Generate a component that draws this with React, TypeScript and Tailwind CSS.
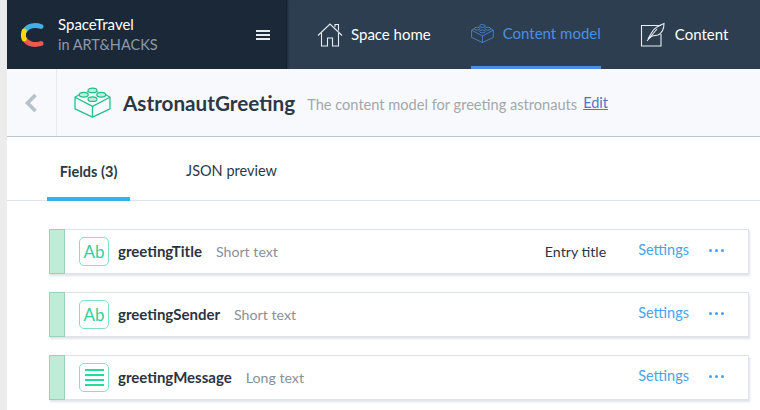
const font = { fontFamily: "Lato, 'Open Sans', sans-serif" };

function Logo() {
  return (
    <svg width="24" height="26" viewBox="0 0 24 26" fill="none" strokeWidth="5" strokeLinecap="round">
      <path d="M4 8.5 C7 3.5 14 2.5 20 4.5" stroke="#3fb1e3" />
      <path d="M20 21.5 C14 23.5 7 22.5 4 17.5" stroke="#f05751" />
      <path d="M3.2 9 C2.2 11.5 2.2 14.5 3.2 17" stroke="#ffd900" />
    </svg>
  );
}

function Brick({ size, color, fill = "none" }: { size: number; color: string; fill?: string }) {
  return (
    <svg width={size} height={size * 0.84} viewBox="0 0 38 32" fill="none" stroke={color} strokeWidth="1.3" strokeLinejoin="round">
      <path d="M1 10.5 L19 20 L37 10.5 L37 22.5 L19 31 L1 22.5 Z" />
      <path d="M19 20 L19 31" />
      <path d="M6 7.5 L1 10.5 M32 7.5 L37 10.5 M13 5 L14 5 M24 5 L25 5" />
      <ellipse cx="19" cy="3.5" rx="4.6" ry="2.4" fill={fill} />
      <ellipse cx="10" cy="8" rx="4.6" ry="2.4" fill={fill} />
      <ellipse cx="28" cy="8" rx="4.6" ry="2.4" fill={fill} />
      <ellipse cx="19" cy="12.5" rx="4.6" ry="2.4" fill={fill} />
    </svg>
  );
}

function HomeIcon() {
  return (
    <svg width="26" height="24" viewBox="0 0 26 24" fill="none" stroke="#e8ecf0" strokeWidth="1.1">
      <path d="M1 12.5 L13 1 L25 12.5" />
      <path d="M4.5 10 V23 H10.5 V15 H15.5 V23 H21.5 V10" />
      <path d="M18 4 V1.5 H21.5 V7.5" />
    </svg>
  );
}

function ContentIcon() {
  return (
    <svg width="26" height="26" viewBox="0 0 26 26" fill="none" stroke="#e8ecf0" strokeWidth="1.1">
      <path d="M21 3.5 H1.5 V24 H21 V12" />
      <path d="M8 17 L12 10 C14 6 19 3.5 24 1.5 C24 6 22 11 18 13 L12 14 Z" />
      <path d="M7 19 L17 7" />
    </svg>
  );
}

function Dots() {
  return (
    <span className="flex gap-[3px]">
      <span className="h-[3px] w-[3px] rounded-full bg-[#4a9fe8]" />
      <span className="h-[3px] w-[3px] rounded-full bg-[#4a9fe8]" />
      <span className="h-[3px] w-[3px] rounded-full bg-[#4a9fe8]" />
    </span>
  );
}

interface Field {
  name: string;
  type: string;
  long?: boolean;
  entryTitle?: boolean;
}

const fields: Field[] = [
  { name: "greetingTitle", type: "Short text", entryTitle: true },
  { name: "greetingSender", type: "Short text" },
  { name: "greetingMessage", type: "Long text", long: true },
];

function FieldRow({ field }: { field: Field }) {
  return (
    <div className="flex h-[45px] items-center border border-[#dfe4ec] bg-white shadow-[1px_2px_2px_rgba(130,145,165,0.25)]">
      <div className="-my-px -ml-px h-[45px] w-[16px] shrink-0 border border-[#9bd2b5] bg-[#c0ebd7]" />
      <div className="ml-[14px] flex h-[29px] w-[30px] shrink-0 items-center justify-center rounded-[5px] border border-[#7fe3c0] text-[17px] text-[#2fd09b]">
        {field.long ? (
          <div className="flex w-[19px] flex-col gap-[3.5px]">
            <div className="h-[1.5px] bg-[#22dc9c]" />
            <div className="h-[1.5px] bg-[#22dc9c]" />
            <div className="h-[1.5px] bg-[#22dc9c]" />
            <div className="h-[1.5px] bg-[#22dc9c]" />
          </div>
        ) : (
          "Ab"
        )}
      </div>
      <span className="ml-[9px] text-[15px] font-bold text-[#2b3440]">{field.name}</span>
      <span className="ml-[14px] text-[14.2px] text-[#8a8f96]">{field.type}</span>
      <div className="ml-auto flex items-center">
        {field.entryTitle && <span className="mr-[32px] text-[14.2px] text-[#2d3440]">Entry title</span>}
        <span className="-mt-[4px] mr-[20px] text-[14.5px] text-[#4aa3ea]">Settings</span>
        <span className="mr-[24px] -mt-[2px]">
          <Dots />
        </span>
      </div>
    </div>
  );
}

export default function App() {
  return (
    <div className="flex h-[410px] w-[760px] overflow-hidden bg-white" style={font}>
      <div className="w-[7px] shrink-0 bg-[#ececec]" />
      <div className="flex min-w-0 flex-1 flex-col">
        <div className="flex h-[69px] shrink-0 whitespace-nowrap bg-[#2d3e50] text-[15px] text-white">
          <div className="flex w-[280px] shrink-0 items-center border-r border-[#14202c] bg-[#1a2838] pl-[14px] shadow-[1px_0_2px_rgba(0,0,0,0.3)]">
            <Logo />
            <div className="ml-[13px] flex flex-col">
              <span className="text-[15px] leading-[20px] text-white">SpaceTravel</span>
              <span className="text-[14.5px] leading-[21px] text-[#8d9aa9]">in ART&HACKS</span>
            </div>
            <div className="ml-auto mr-[16px] flex w-[14px] flex-col gap-[2px]">
              <div className="h-[2px] bg-[#e8ecf0]" />
              <div className="h-[2px] bg-[#e8ecf0]" />
              <div className="h-[2px] bg-[#e8ecf0]" />
            </div>
          </div>
          <div className="ml-[30px] flex items-center">
            <HomeIcon />
            <span className="ml-[8px]">Space home</span>
          </div>
          <div className="ml-[40px] flex h-full w-[130px] items-center border-b-[3px] border-[#4a90e2] text-[#4a90e2]">
            <Brick size={25} color="#4a90e2" />
            <span className="ml-[9px]">Content model</span>
          </div>
          <div className="ml-[39px] flex items-center">
            <ContentIcon />
            <span className="ml-[9px]">Content</span>
          </div>
        </div>

        <div className="flex h-[68px] shrink-0 items-center border-b border-[#b9c8ce] bg-[#f7f9fc]">
          <div className="flex h-full w-[50px] shrink-0 items-center border-r border-[#e6eaef] pl-[17px]">
            <svg width="14" height="20" viewBox="0 0 14 20" fill="none" stroke="#b5c2c8" strokeWidth="3.6">
              <path d="M11.5 2 L3.5 10 L11.5 18" />
            </svg>
          </div>
          <div className="ml-[17px]">
            <Brick size={37} color="#21c08b" fill="#bfeedd" />
          </div>
          <span className="ml-[12px] mt-[3px] text-[20.7px] font-bold text-[#2d3845]">AstronautGreeting</span>
          <span className="ml-[12px] mt-[5px] text-[14.6px] text-[#a3a7ab]">The content model for greeting astronauts</span>
          <span className="ml-[6px] mt-[1px] text-[14.5px] text-[#4a78c8] underline">Edit</span>
        </div>

        <div className="flex h-[64px] shrink-0 border-b border-[#dfe4ec] pl-[40px] text-[14.5px]">
          <div className="flex h-[64px] w-[83px] items-center justify-center border-b-[4px] border-[#36b1ee] pt-[9px] font-bold text-[#2d3845]">
            Fields (3)
          </div>
          <div className="ml-[56px] flex items-center pb-[4px] pt-[9px] text-[#2d3845]">JSON preview</div>
        </div>

        <div className="flex flex-col gap-[18px] pl-[42px] pr-[11px] pt-[28px]">
          {fields.map((field) => (
            <FieldRow key={field.name} field={field} />
          ))}
        </div>
      </div>
    </div>
  );
}
